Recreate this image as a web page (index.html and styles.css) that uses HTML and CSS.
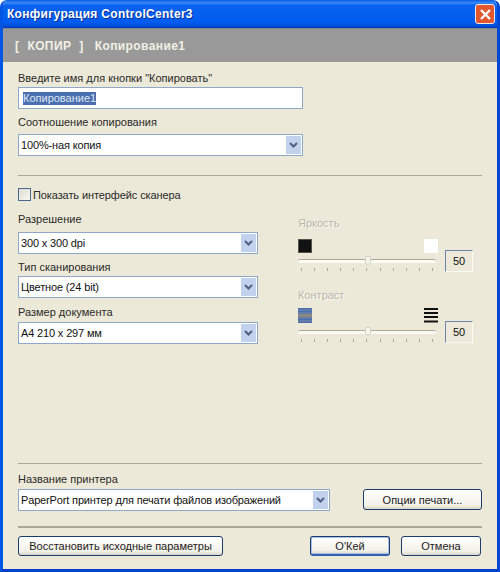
FILE: index.html
```html
<!DOCTYPE html>
<html>

<head>
    <meta charset="UTF-8">
    <title>Конфигурация ControlCenter3</title>
    <link rel="stylesheet" href="styles.css">
</head>

<body>
    <div class="window">
        <div class="titlebar">
            <span class="title">Конфигурация ControlCenter3</span>
            <div class="close-btn">
                <svg width="15" height="15" viewBox="0 0 15 15">
                    <path d="M3 3L12 12M12 3L3 12" stroke="#fff" stroke-width="2.4" fill="none" />
                </svg>
            </div>
        </div>
        <div class="header">
            <span class="header-tag">[</span>
            <span class="header-tag header-name">КОПИР</span>
            <span class="header-tag header-close">]</span>
            <span class="header-tag">Копирование1</span>
        </div>

        <div class="content">
            <div class="label label-first">Введите имя для кнопки "Копировать"</div>
            <div class="input input-name"><span class="selected">Копирование1</span></div>
            <div class="label label-second">Соотношение копирования</div>
            <div class="select select-ratio">
                <span>100%-ная копия</span>
                <div class="arrow"><svg width="9" height="6" viewBox="0 0 9 6"><path d="M1 1L4.5 4.5L8 1" stroke="#4d6185" stroke-width="2" fill="none" /></svg></div>
            </div>

            <div class="divider divider-top"></div>

            <div class="check-row">
                <div class="checkbox"></div>
                <span>Показать интерфейс сканера</span>
            </div>

            <div class="scan">
                <div class="scan-left">
                    <div class="label label-res">Разрешение</div>
                    <div class="select select-res">
                        <span>300 x 300 dpi</span>
                        <div class="arrow"><svg width="9" height="6" viewBox="0 0 9 6"><path d="M1 1L4.5 4.5L8 1" stroke="#4d6185" stroke-width="2" fill="none" /></svg></div>
                    </div>
                    <div class="label label-type">Тип сканирования</div>
                    <div class="select select-type">
                        <span>Цветное (24 bit)</span>
                        <div class="arrow"><svg width="9" height="6" viewBox="0 0 9 6"><path d="M1 1L4.5 4.5L8 1" stroke="#4d6185" stroke-width="2" fill="none" /></svg></div>
                    </div>
                    <div class="label label-size">Размер документа</div>
                    <div class="select select-size">
                        <span>A4 210 x 297 мм</span>
                        <div class="arrow"><svg width="9" height="6" viewBox="0 0 9 6"><path d="M1 1L4.5 4.5L8 1" stroke="#4d6185" stroke-width="2" fill="none" /></svg></div>
                    </div>
                </div>

                <div class="scan-right">
                    <div class="label-off">Яркость</div>
                    <div class="slider-group">
                        <div class="slider-col">
                            <div class="swatches">
                                <div class="swatch swatch-black"></div>
                                <div class="swatch swatch-white"></div>
                            </div>
                            <div class="track"><div class="thumb"></div></div>
                            <div class="ticks"><i></i><i></i><i></i><i></i><i></i><i></i><i></i><i></i><i></i><i></i><i></i></div>
                        </div>
                        <div class="value">50</div>
                    </div>

                    <div class="label-off label-contrast">Контраст</div>
                    <div class="slider-group slider-group-contrast">
                        <div class="slider-col">
                            <div class="swatches swatches-lines">
                                <svg width="14" height="15" viewBox="0 0 14 15">
                                    <rect width="14" height="15" fill="#4a6fb0" />
                                    <path d="M0 2H14M0 5H14M0 10H14M0 13H14" stroke="#7f8aa0" stroke-width="1" />
                                    <rect y="6" width="14" height="3" fill="#8a8a80" />
                                </svg>
                                <svg width="14" height="15" viewBox="0 0 14 15">
                                    <path d="M0 1H14M0 5H14M0 9H14M0 13.5H14" stroke="#111" stroke-width="2" />
                                </svg>
                            </div>
                            <div class="track"><div class="thumb"></div></div>
                            <div class="ticks"><i></i><i></i><i></i><i></i><i></i><i></i><i></i><i></i><i></i><i></i><i></i></div>
                        </div>
                        <div class="value">50</div>
                    </div>
                </div>
            </div>

            <div class="spacer"></div>

            <div class="divider"></div>
            <div class="label label-printer">Название принтера</div>
            <div class="printer-row">
                <div class="select select-printer">
                    <span>PaperPort принтер для печати файлов изображений</span>
                    <div class="arrow"><svg width="9" height="6" viewBox="0 0 9 6"><path d="M1 1L4.5 4.5L8 1" stroke="#4d6185" stroke-width="2" fill="none" /></svg></div>
                </div>
                <button class="btn btn-options">Опции печати...</button>
            </div>
            <div class="divider divider-bottom"></div>
            <div class="button-row">
                <button class="btn btn-reset">Восстановить исходные параметры</button>
                <button class="btn btn-ok">О'Кей</button>
                <button class="btn btn-cancel">Отмена</button>
            </div>
        </div>
    </div>
</body>

</html>
```

FILE: styles.css
```css
html,
body {
    margin: 0;
    padding: 0;
    background: #fff;
}

.window {
    width: 500px;
    height: 572px;
    box-sizing: border-box;
    display: flex;
    flex-direction: column;
    background: #ece9d8;
    border-left: 3px solid #0055e5;
    border-right: 3px solid #0046d5;
    border-bottom: 3px solid #0040c8;
    border-radius: 7px 7px 0 0;
    font-family: "Liberation Sans", Arial, sans-serif;
    font-size: 11px;
    color: #2a2a2a;
    overflow: hidden;
}

.titlebar {
    height: 28px;
    margin: 0 -3px;
    padding: 0 5px 0 7px;
    flex-shrink: 0;
    display: flex;
    align-items: center;
    justify-content: space-between;
    background: linear-gradient(to bottom, #0a5ae6 0, #3c8cf8 3px, #0a62ee 5px, #005cf0 22px, #0050dc 26px, #0038b4 28px);
}

.title {
    color: #fff;
    font-size: 12px;
    font-weight: bold;
    letter-spacing: 0.3px;
    text-shadow: 1px 1px 0 #0f2f90;
}

.close-btn {
    width: 20px;
    height: 20px;
    box-sizing: border-box;
    border: 1px solid #f4e8e4;
    border-radius: 3px;
    background: #e2582e;
    display: flex;
    align-items: center;
    justify-content: center;
}

.header {
    height: 34px;
    flex-shrink: 0;
    padding-left: 12px;
    display: flex;
    align-items: center;
    background: #999;
    border-top: 1px solid #86868c;
    box-sizing: border-box;
    font-size: 12px;
    font-weight: bold;
    letter-spacing: 0.4px;
    color: #f2f0e4;
}

.header-name {
    margin-left: 8px;
}

.header-close {
    margin-left: 8px;
    margin-right: 11px;
}

.content {
    flex: 1;
    padding: 0 15px 13px;
    display: flex;
    flex-direction: column;
}

.label {
    height: 13px;
    line-height: 13px;
    white-space: nowrap;
}

.label-first {
    margin-top: 10px;
}

.label-second {
    margin-top: 7px;
}

.input,
.select {
    box-sizing: border-box;
    height: 22px;
    display: flex;
    align-items: center;
    background: #fff;
    border: 1px solid #8fa8c8;
    color: #111;
    white-space: nowrap;
}

.input-name {
    width: 285px;
    margin-top: 2px;
    padding-left: 4px;
}

.selected {
    background: #4a6fb0;
    color: #dfe6f2;
    line-height: 13px;
}

.select {
    padding-left: 2px;
    justify-content: space-between;
    letter-spacing: -0.15px;
}

.select span {
    margin-bottom: 1px;
}

.select-ratio {
    width: 285px;
    margin-top: 5px;
}

.arrow {
    width: 15px;
    height: 18px;
    margin-right: 1px;
    display: flex;
    align-items: center;
    justify-content: center;
    background: #c3d2ec;
}

.divider {
    height: 1px;
    width: 464px;
    background: #aca899;
}

.divider-top {
    margin-top: 19px;
}

.divider-bottom {
    margin-top: 15px;
    height: 2px;
}

.check-row {
    margin-top: 12px;
    display: flex;
    align-items: center;
    gap: 2px;
    letter-spacing: -0.1px;
}

.checkbox {
    width: 13px;
    height: 13px;
    box-sizing: border-box;
    border: 1px solid #4a6a96;
    background: linear-gradient(135deg, #dcdccf, #f8f8f2);
}

.scan {
    display: flex;
}

.scan-left {
    width: 240px;
}

.label-res {
    margin-top: 12px;
}

.select-res {
    margin-top: 6px;
}

.label-type {
    margin-top: 7px;
}

.select-type {
    margin-top: 2px;
}

.label-size {
    margin-top: 8px;
}

.select-size {
    margin-top: 3px;
}

.scan-right {
    width: 175px;
    margin-left: 40px;
    padding-top: 16px;
}

.label-off {
    height: 13px;
    line-height: 13px;
    color: #b8b6aa;
    text-shadow: 1px 1px 0 #fbfaf4;
}

.label-contrast {
    margin-top: 17px;
}

.slider-group {
    display: flex;
    justify-content: space-between;
    align-items: flex-end;
    margin-top: 9px;
}

.slider-group-contrast {
    margin-top: 6px;
}

.slider-col {
    width: 140px;
}

.swatches {
    display: flex;
    justify-content: space-between;
}

.swatch {
    width: 14px;
    height: 14px;
}

.swatch-black {
    background: #111;
    border: 1px solid #55544c;
    box-sizing: border-box;
}

.swatch-white {
    background: #fff;
}

.track {
    position: relative;
    width: 138px;
    height: 3px;
    margin-top: 6px;
    background: #fbfaf3;
    border-top: 1px solid #aca899;
    border-radius: 2px;
}

.swatches-lines + .track {
    margin-top: 7px;
}

.thumb {
    position: absolute;
    left: 67px;
    top: -4px;
    width: 6px;
    height: 9px;
    background: #f5f4ea;
    border: 1px solid #d4d2c6;
    box-sizing: border-box;
    border-radius: 1px 1px 3px 3px;
}

.ticks {
    width: 132px;
    margin: 5px 0 1px 3px;
    display: flex;
    justify-content: space-between;
}

.ticks i {
    display: block;
    width: 1px;
    height: 3px;
    background: #aca899;
}

.value {
    width: 28px;
    height: 22px;
    box-sizing: border-box;
    display: flex;
    align-items: center;
    justify-content: center;
    border: 1px solid #fbfaf3;
    border-top-color: #6f86b0;
    border-left-color: #6f86b0;
    color: #111;
}

.spacer {
    flex: 1;
}

.label-printer {
    margin-top: 9px;
}

.printer-row {
    margin-top: 3px;
    display: flex;
    align-items: flex-start;
}

.select-printer {
    width: 312px;
}

.btn {
    height: 21px;
    padding: 0;
    box-sizing: border-box;
    border: 1px solid #1d3c6e;
    border-radius: 3px;
    background: linear-gradient(to bottom, #fff, #f2f1e8 80%, #d8d5c6);
    font-family: "Liberation Sans", Arial, sans-serif;
    font-size: 11px;
    color: #222;
}

.btn-options {
    width: 119px;
    margin-left: 33px;
}

.button-row {
    margin-top: 8px;
    display: flex;
}

.button-row .btn {
    height: 20px;
}

.btn-reset {
    width: 205px;
}

.btn-ok {
    width: 80px;
    margin-left: 87px;
    border-bottom: 2px solid #3560b0;
    box-shadow: inset 0 0 0 1px #a8c0e8;
}

.btn-cancel {
    width: 80px;
    margin-left: 11px;
}
```
